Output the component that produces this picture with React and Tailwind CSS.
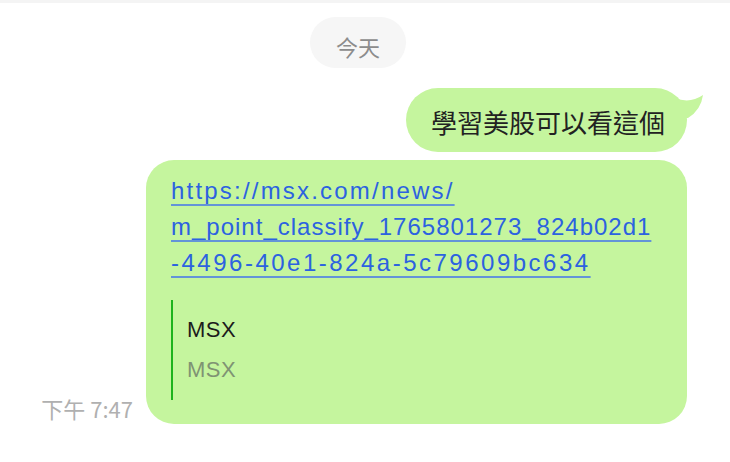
import React from 'react';

const cjk = { fontFamily: '"Noto Sans CJK TC", "Liberation Sans", sans-serif' };

const LinkLine = ({ children, className }) => (
  <span
    className={`block w-fit underline decoration-2 decoration-[#6393d8] underline-offset-[5px] ${className}`}
  >
    {children}
  </span>
);

const App = () => {
  return (
    <div
      className="w-[730px] h-[462px] bg-white overflow-hidden flex flex-col"
      style={{ fontFamily: '"Liberation Sans", "Noto Sans CJK TC", sans-serif' }}
    >
      <div className="h-[3px] bg-[#f4f4f4]" />

      {/* date pill */}
      <div className="mt-[14px] pl-[310px]">
        <div
          className="w-[96px] h-[51px] rounded-full bg-[#f6f6f6] flex items-center justify-center pt-[8px] text-[22px] text-[#8c8c8c]"
          style={cjk}
        >
          今天
        </div>
      </div>

      {/* outgoing text bubble */}
      <div className="mt-[20px] flex justify-end pr-[43px]">
        <div className="relative w-[281px] h-[64px] rounded-full bg-[#c5f59e] flex items-center pl-[25px] pt-[4px]">
          <svg
            className="absolute left-[264px] top-0"
            width="40"
            height="32"
            viewBox="0 0 40 32"
          >
            <path d="M5 10 Q20 16 33 7 Q31 22 18 30 L5 30 Z" fill="#c5f59e" />
          </svg>
          <span className="relative text-[26px] leading-none text-[#222]" style={cjk}>
            學習美股可以看這個
          </span>
        </div>
      </div>

      {/* link bubble */}
      <div className="mt-[8px] flex items-end justify-end gap-[13px] pr-[43px]">
        <span className="mb-[5px] text-[22px] leading-none text-[#b0b0b0]" style={cjk}>
          下午 7:47
        </span>
        <div className="w-[541px] h-[264px] rounded-[28px] bg-[#c5f59e] pl-[25px] pt-[13px]">
          <div className="text-[24px] leading-[36px] text-[#2c62e0]">
            <LinkLine className="tracking-[2.2px]">https://msx.com/news/</LinkLine>
            <LinkLine className="tracking-[1px]">m_point_classify_1765801273_824b02d1</LinkLine>
            <LinkLine className="tracking-[2.5px]">-4496-40e1-824a-5c79609bc634</LinkLine>
          </div>
          <div className="mt-[19px] h-[100px] border-l-2 border-[#1db31d] pl-[14px] pt-[10px]">
            <div className="text-[22px] leading-[40px] tracking-[0.5px] text-[#1c1c1c]">MSX</div>
            <div className="text-[22px] leading-[40px] tracking-[0.5px] text-[#7f9373]">MSX</div>
          </div>
        </div>
      </div>
    </div>
  );
};

export default App;
